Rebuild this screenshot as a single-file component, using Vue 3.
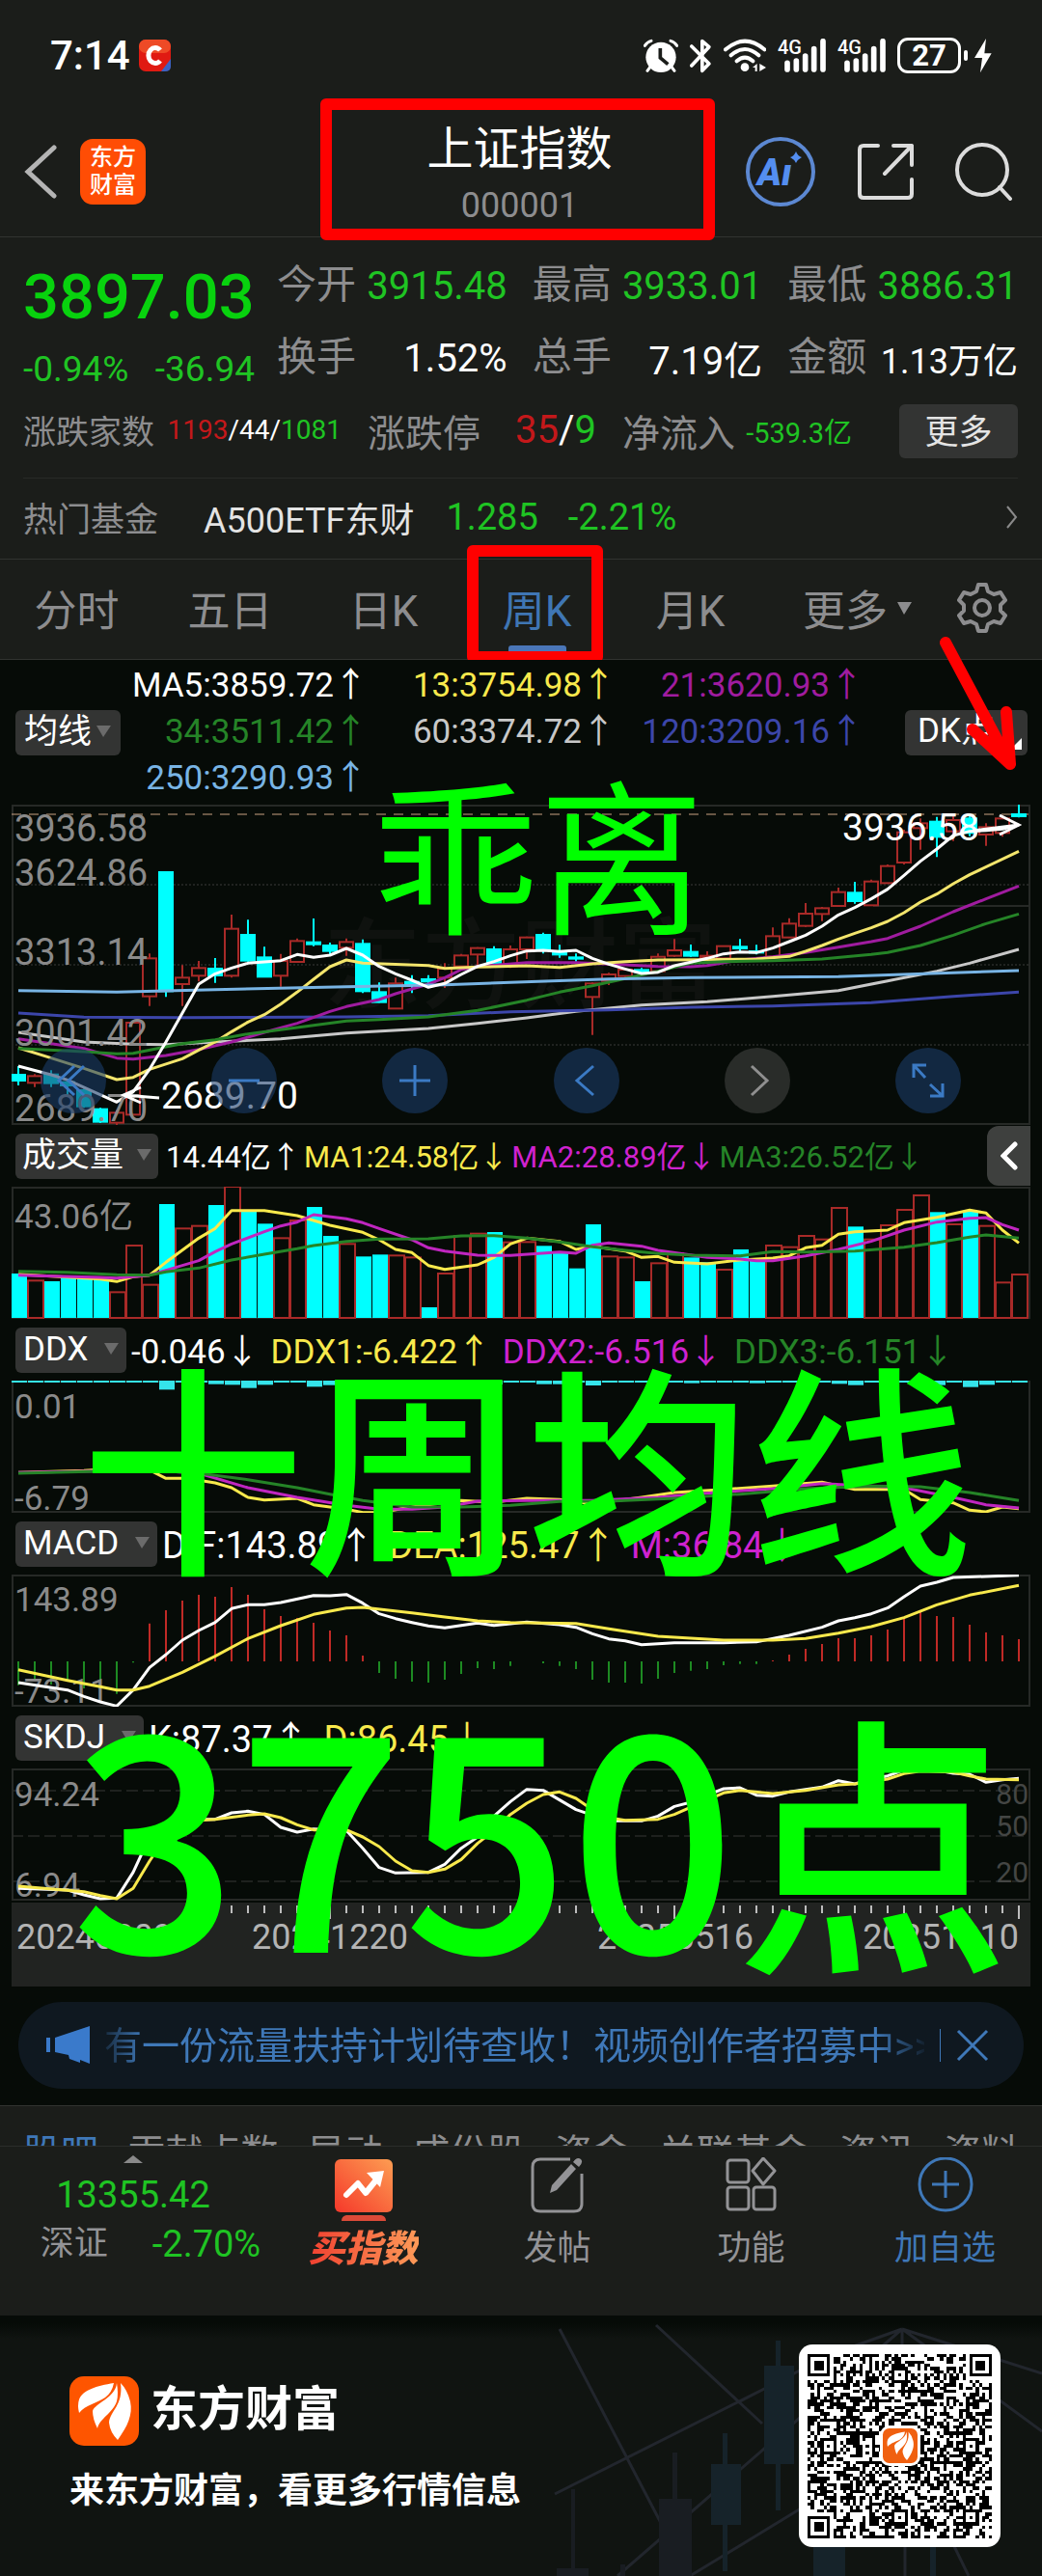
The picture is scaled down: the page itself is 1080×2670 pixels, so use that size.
<template>
  <main class="page">
    <!-- Status bar -->
    <div class="status">
      <span class="clock">7:14</span>
      <svg class="badge-c" width="33" height="33" viewBox="0 0 33 33">
        <rect width="33" height="33" rx="7" fill="#e01a12" />
        <rect width="33" height="14" rx="7" fill="#ee4a26" />
        <path d="M23 33 L33 20 V28 Q33 33 27 33 Z" fill="#3b62c4" />
        <path d="M22 11 A7 8 0 1 0 22 22" fill="none" stroke="#fff" stroke-width="5" />
      </svg>
      <div class="status-icons">
        <svg width="36" height="36" viewBox="54 28 108 108">
          <circle cx="108" cy="86" r="47" fill="#fff" />
          <path d="M66 128 L78 112 M150 128 L138 112 M58 50 Q66 38 78 35 M158 50 Q150 38 138 35" stroke="#fff" stroke-width="9" stroke-linecap="round" fill="none" />
          <path d="M106 58 V88 L130 108" stroke="#1b1d1a" stroke-width="11" fill="none" />
        </svg>
        <svg width="23" height="36" viewBox="197 28 68 108">
          <path d="M202 52 L256 106 L235 128 V36 L256 54 L202 112" stroke="#fff" stroke-width="11" stroke-linecap="round" stroke-linejoin="round" fill="none" />
        </svg>
        <svg width="44" height="36" viewBox="300 28 132 108">
          <path d="M306 62 Q366 10 427 62 M323 80 Q366 42 409 80 M341 98 Q366 76 391 98" stroke="#fff" stroke-width="12" stroke-linecap="round" fill="none" />
          <circle cx="366" cy="117" r="13" fill="#fff" />
          <path d="M390 118 L404 106 V130 H398 V118 Z M432 118 L412 106 V130 L418 126 Z" fill="#fff" />
        </svg>
        <svg v-for="n in 2" :key="n" width="50" height="36" viewBox="468 28 150 108">
          <text x="468" y="77" class="net">4G</text>
          <path d="M498 104 V124 M526 97 V124 M554 82 V124 M581 60 V124 M609 36 V124" stroke="#fff" stroke-width="17" stroke-linecap="round" />
        </svg>
        <span class="battery"><b>27</b></span>
        <svg class="bolt" width="18" height="36" viewBox="1079 26 54 108">
          <path d="M1115 26 L1079 86 H1103 L1097 132 L1132 72 H1110 Z" fill="#fff" />
        </svg>
      </div>
    </div>

    <!-- Header -->
    <header class="header">
      <button class="plain" aria-label="返回">
        <svg width="34" height="56" viewBox="0 0 34 56"><path d="M31 3 L4 28 L31 53" fill="none" stroke="#b4b4b4" stroke-width="5" stroke-linecap="round" /></svg>
      </button>
      <a class="app-logo" href="#"><span>东方</span><span>财富</span></a>
      <div class="title">
        <h1>上证指数</h1>
        <p>000001</p>
      </div>
      <div class="tools">
        <button class="plain" aria-label="Ai">
          <svg width="74" height="74" viewBox="0 0 74 74">
            <circle cx="37" cy="37" r="34" fill="none" stroke="#5c88d2" stroke-width="4" />
            <text x="13" y="51" class="ai">Aı</text>
            <path d="M53 16 Q55 21 59 22 Q55 24 53 28 Q51 24 47 22 Q51 21 53 16 Z" fill="#548ef0" />
          </svg>
        </button>
        <button class="plain" aria-label="分享">
          <svg width="58" height="58" viewBox="0 0 58 58">
            <path d="M21 2 H6 Q2 2 2 6 V52 Q2 56 6 56 H52 Q56 56 56 52 V37 M37 2 H56 V22 M56 2 L28 31" fill="none" stroke="#dcdcdc" stroke-width="4" stroke-linecap="round" stroke-linejoin="round" />
          </svg>
        </button>
        <button class="plain" aria-label="搜索">
          <svg width="60" height="60" viewBox="0 0 60 60">
            <circle cx="28" cy="28" r="26" fill="none" stroke="#dcdcdc" stroke-width="4" />
            <path d="M46 46 L57 58" stroke="#dcdcdc" stroke-width="4" stroke-linecap="round" />
          </svg>
        </button>
      </div>
    </header>

    <!-- Quote -->
    <section class="quote">
      <div class="quote-top">
        <div class="price">
          <strong>3897.03</strong>
          <p><span>-0.94%</span><span>-36.94</span></p>
        </div>
        <dl class="stats">
          <div v-for="s in stats" :key="s.label">
            <dt>{{ s.label }}</dt>
            <dd :class="s.cls">{{ s.value }}</dd>
          </div>
        </dl>
      </div>
      <div class="breadth">
        <div class="pair first"><span class="lbl">涨跌家数</span><span><i class="red">1193</i>/44/<i class="green">1081</i></span></div>
        <div class="pair second"><span class="lbl">涨跌停</span><span><i class="red">35</i>/<i class="green">9</i></span></div>
        <div class="pair third"><span class="lbl">净流入</span><span class="green">-539.3亿</span></div>
        <button class="more">更多</button>
      </div>
      <a class="fund" href="#">
        <span class="lbl">热门基金</span>
        <span class="fund-name">A500ETF东财</span>
        <span class="green">1.285</span>
        <span class="green">-2.21%</span>
        <svg width="12" height="24" viewBox="0 0 12 24"><path d="M1 1 L10 12 L1 23" fill="none" stroke="#8a8a8a" stroke-width="2" /></svg>
      </a>
    </section>

    <!-- Period tabs -->
    <nav class="tabs">
      <button v-for="t in tabs" :key="t" :class="{ active: t === activeTab }" @click="activeTab = t">{{ t }}</button>
      <button>更多<svg width="15" height="13" viewBox="0 0 15 13"><path d="M0 0 H15 L7 13 Z" fill="#8d8d8f" /></svg></button>
      <button class="gear" aria-label="设置">
        <svg width="52" height="52" viewBox="0 0 52 52">
          <path d="M22 2 H30 L32 9 L38 12 L45 10 L50 18 L45 23 V29 L50 34 L45 42 L38 40 L32 43 L30 50 H22 L20 43 L14 40 L7 42 L2 34 L7 29 V23 L2 18 L7 10 L14 12 L20 9 Z" fill="none" stroke="#8d8d8f" stroke-width="4" stroke-linejoin="round" />
          <circle cx="26" cy="26" r="8" fill="none" stroke="#8d8d8f" stroke-width="4" />
        </svg>
      </button>
      <span class="tab-mark"></span>
    </nav>

    <!-- Charts -->
    <section class="charts">
      <div class="legend">
        <label class="pick">
          <select aria-label="主图指标"><option>均线</option></select>
          <svg width="15" height="12" viewBox="0 0 15 12"><path d="M0 0 H15 L7 12 Z" fill="#6b6b6b" /></svg>
        </label>
        <div class="ma-grid">
          <span v-for="m in averages" :key="m.text" :class="m.cls">{{ m.text }}</span>
        </div>
        <button class="dk">DK点</button>
      </div>

      <div class="kline">
        <svg class="panel" viewBox="12 0 1056 332">
          <text x="335" y="203" class="watermark">东方财富</text>
          <path d="M12 83 H1067 M12 166 H1067 M12 249 H1067" class="dotted" />
          <path d="M905 105 H1067" class="frame" />
          <rect x="13" y="1" width="1054" height="330" class="frame" />
          <path d="M12 10 H1067" stroke="#c9a283" stroke-width="1" stroke-dasharray="10 8" />
          <g v-for="(c, i) in candles" :key="i" :class="c[4] ? 'up' : 'down'">
            <path :d="wick(c, i)" />
            <rect :x="12 + 17 * i" :y="(c[1] - 42) / 3" width="14" :height="(c[2] - c[1]) / 3" />
          </g>
          <polyline v-for="l in klineLines" :key="l.color" :points="pts(l.data, 42)" :stroke="l.color" class="line" />
          <text v-for="a in priceAxis" :key="a.text" x="15" :y="a.y" class="axis">{{ a.text }}</text>
          <path d="M146 293 L128 301 L146 309 M128 301 L165 304 M1036 11 L1056 21 L1036 31 M1008 27 L1056 21" fill="none" stroke="#fff" stroke-width="3" />
          <text x="167" y="315" class="extreme">2689.70</text>
          <text x="873" y="37" class="extreme">3936.58</text>
        </svg>
        <div class="controls">
          <button v-for="b in controls" :key="b.name" :aria-label="b.name" :class="{ off: b.off }">
            <svg width="68" height="68" viewBox="0 0 68 68"><path :d="b.d" /></svg>
          </button>
        </div>
      </div>

      <template v-for="p in panels" :key="p.name">
        <div class="panel-head" :class="p.cls">
          <label class="pick">
            <select :aria-label="p.name"><option>{{ p.name }}</option></select>
            <svg width="15" height="12" viewBox="0 0 15 12"><path d="M0 0 H15 L7 12 Z" fill="#6b6b6b" /></svg>
          </label>
          <span v-for="v in p.values" :key="v.text" :class="v.cls">{{ v.text }}</span>
          <button v-if="p.cls === 'volume'" class="collapse" aria-label="展开">
            <svg width="18" height="30" viewBox="0 0 18 30"><path d="M15 3 L3 15 L15 27" fill="none" stroke="#fff" stroke-width="5" stroke-linecap="round" /></svg>
          </button>
        </div>
        <svg class="panel" viewBox="12 0 1056 137">
          <path v-if="p.cls === 'skdj'" d="M12 23 H1067 M12 70 H1067 M12 117 H1067" class="dashed" />
          <rect x="13" y="1" width="1054" height="135" class="frame" />
          <template v-if="p.cls === 'volume'">
            <rect v-for="(b, i) in volumes" :key="i" :x="12 + 17 * i" :y="(b[0] - 210) / 3" width="16" :height="136 - (b[0] - 210) / 3" :class="b[1] ? 'vol-up' : 'vol-down'" />
          </template>
          <template v-if="p.cls === 'ddx'">
            <rect v-for="(v, i) in ddxBars" :key="i" :x="12 + 17 * i" y="0" width="16" :height="(v - 152) / 3" fill="#35e4ea" />
          </template>
          <template v-if="p.cls === 'macd'">
            <path v-for="(v, i) in macdBars" :key="i" :d="`M${19 + 17 * i} 90 V${(v - 756) / 3}`" :stroke="v < 1026 ? '#c02a26' : '#1d8a22'" stroke-width="2" />
          </template>
          <text v-for="a in p.axis" :key="a.text" :x="a.x || 15" :y="a.y" :class="a.x ? 'axis-dim' : 'axis-small'">{{ a.text }}</text>
          <polyline v-for="l in p.lines" :key="l.color" :points="pts(l.data, p.top)" :stroke="l.color" class="line" />
        </svg>
      </template>

      <svg class="panel dates" viewBox="12 0 1056 87">
        <path :d="ticks" stroke="#bdbdbd" stroke-width="2" />
        <text x="17" y="48">20240809</text>
        <text x="342" y="48" text-anchor="middle">20241220</text>
        <text x="700" y="48" text-anchor="middle">20250516</text>
        <text x="1056" y="48" text-anchor="end">20251010</text>
      </svg>

      <svg class="arrow" width="84" height="144" viewBox="0 0 84 144">
        <path d="M8 8 L75 134 M36 98 L75 134 L71 80" fill="none" stroke="#f00" stroke-width="12" stroke-linecap="round" stroke-linejoin="round" />
      </svg>
      <span class="note note-a">乖离</span>
      <span class="note note-b">十周均线</span>
      <span class="note note-c">3750<small>点</small></span>
    </section>

    <!-- Notice -->
    <section class="notice-wrap">
      <div class="notice">
        <svg width="46" height="40" viewBox="0 0 46 40"><path d="M9 12 L45 0 V39 L35 35 V38 L24 34 L23 30 L9 27 Z M0 12 H4 V27 H0 Z" fill="#3a7acb" /></svg>
        <a href="#">有一份流量扶持计划待查收！视频创作者招募中&gt;&gt;</a>
        <button aria-label="关闭">
          <svg width="34" height="34" viewBox="0 0 34 34"><path d="M2 2 L32 32 M32 2 L2 32" stroke="#3f78b8" stroke-width="3" /></svg>
        </button>
      </div>
    </section>

    <nav class="sections">
      <a v-for="(s, i) in sections" :key="s" href="#" :class="{ active: i === 0 }">{{ s }}</a>
    </nav>

    <!-- Bottom bar -->
    <nav class="bottom">
      <a class="peer" href="#">
        <svg width="20" height="8" viewBox="0 0 20 8"><path d="M0 8 L10 0 L20 8 Z" fill="#8a8a8a" /></svg>
        <b>13355.42</b>
        <span><i>深证</i><b>-2.70%</b></span>
      </a>
      <a class="buy" href="#">
        <svg width="60" height="66" viewBox="0 0 60 66">
          <defs>
            <linearGradient id="hot" x1="0" y1="1" x2="1" y2="0">
              <stop offset="0" stop-color="#f5382a" />
              <stop offset="1" stop-color="#fd9d52" />
            </linearGradient>
          </defs>
          <rect y="2" width="60" height="55" rx="6" fill="url(#hot)" />
          <path d="M12 60 H48 Q53 61 53 66 H7 Q7 61 12 60 Z" fill="#dc4a38" />
          <path d="M12 39 L24 27 L32 37 L45 21" fill="none" stroke="#fff" stroke-width="6" stroke-linecap="round" stroke-linejoin="round" />
          <path d="M33 16 L51 14 L47 31 Z" fill="#fff" />
        </svg>
        <span>买指数</span>
      </a>
      <a href="#">
        <svg width="60" height="66" viewBox="0 0 60 66">
          <path d="M43 2 H12 Q4 2 4 10 V48 Q4 56 12 56 H47 Q55 56 55 48 V17" fill="none" stroke="#939396" stroke-width="3" />
          <path d="M22 37 L24 29 L44 7 L49 12 L29 34 Z M46 5 Q50 -1 54 2 Q57 5 52 10 Z" fill="#939396" />
        </svg>
        <span>发帖</span>
      </a>
      <a href="#">
        <svg width="60" height="66" viewBox="0 0 60 66" fill="none" stroke="#939396" stroke-width="3">
          <rect x="5" y="3" width="22" height="23" rx="3" />
          <path d="M42 1 L54 14 L42 28 L31 14 Z" stroke-linejoin="round" />
          <rect x="5" y="31" width="22" height="23" rx="3" />
          <rect x="32" y="31" width="22" height="23" rx="3" />
        </svg>
        <span>功能</span>
      </a>
      <a class="add" href="#">
        <svg width="60" height="66" viewBox="0 0 60 66" fill="none" stroke="#3f78b8" stroke-width="3">
          <circle cx="30" cy="28" r="27" />
          <path d="M30 14 V42 M16 28 H44" />
        </svg>
        <span>加自选</span>
      </a>
    </nav>

    <!-- Footer -->
    <footer class="footer">
      <svg class="backdrop" viewBox="560 0 520 270" preserveAspectRatio="xMaxYMin slice">
        <g stroke="#22262d" stroke-width="3" fill="none">
          <path d="M580 14 L685 215 M680 10 L790 112 M575 185 L800 72 M935 14 L862 40 L765 90 M935 14 L640 270 M935 14 V50 M935 14 L1080 120 M935 14 L1080 60 M715 270 L830 200 M960 180 L1004 270 M938 240 V270" />
        </g>
        <g fill="#16232a">
          <rect x="792" y="52" width="31" height="102" /><rect x="804" y="26" width="5" height="176" />
          <rect x="737" y="154" width="31" height="63" /><rect x="749" y="122" width="5" height="143" />
          <rect x="843" y="230" width="33" height="40" /><rect x="964" y="230" width="6" height="40" />
        </g>
        <g fill="#191d22">
          <rect x="683" y="190" width="34" height="80" /><rect x="697" y="142" width="5" height="60" />
          <rect x="577" y="262" width="33" height="8" /><rect x="592" y="180" width="4" height="90" />
          <rect x="643" y="258" width="5" height="12" />
        </g>
      </svg>
      <div class="brand">
        <div class="brand-row">
          <svg width="72" height="72" viewBox="0 0 72 72">
            <rect width="72" height="72" rx="15" fill="#fe5500" />
            <path :d="feather" fill="#fff" />
          </svg>
          <b>东方财富</b>
        </div>
        <p>来东方财富，看更多行情信息</p>
      </div>
      <div class="qr">
        <svg width="191" height="191" viewBox="0 0 57 57" shape-rendering="crispEdges">
          <path :d="qrPath" fill="#000" />
        </svg>
        <svg class="qr-logo" width="42" height="42" viewBox="-6 -6 84 84">
          <rect x="-6" y="-6" width="84" height="84" rx="20" fill="#fff" />
          <rect width="72" height="72" rx="13" fill="#f06010" />
          <path :d="feather" fill="#fff" />
        </svg>
      </div>
    </footer>
  </main>
</template>

<script setup>
import { ref } from 'vue';

const activeTab = ref('周K');
const tabs = ['分时', '五日', '日K', '周K', '月K'];
const sections = ['股吧', '贡献点数', '异动', '成份股', '资金', '关联基金', '资讯', '资料'];

const stats = [
  { label: '今开', value: '3915.48', cls: 'green' },
  { label: '最高', value: '3933.01', cls: 'green' },
  { label: '最低', value: '3886.31', cls: 'green' },
  { label: '换手', value: '1.52%', cls: '' },
  { label: '总手', value: '7.19亿', cls: '' },
  { label: '金额', value: '1.13万亿', cls: 'small' }
];

const averages = [
  { text: 'MA5:3859.72↑', cls: 'c-white' },
  { text: '13:3754.98↑', cls: 'c-yellow' },
  { text: '21:3620.93↑', cls: 'c-purple' },
  { text: '34:3511.42↑', cls: 'c-green' },
  { text: '60:3374.72↑', cls: 'c-grey' },
  { text: '120:3209.16↑', cls: 'c-indigo' },
  { text: '250:3290.93↑', cls: 'c-sky' }
];

const controls = [
  { name: '快退', d: 'M35 19 L19 34 L35 49 M45 19 L29 34 L45 49' },
  { name: '缩小', d: 'M18 34 H50' },
  { name: '放大', d: 'M18 34 H50 M34 18 V50' },
  { name: '左移', d: 'M41 19 L24 34 L41 49' },
  { name: '右移', d: 'M28 19 L44 34 L28 49', off: true },
  { name: '全屏', d: 'M32 18 H19 V31 M19 18 L31 31 M36 50 H49 V37 M49 50 L36 38' }
];

const priceAxis = [
  { text: '3936.58', y: 38 },
  { text: '3624.86', y: 84 },
  { text: '3313.14', y: 166 },
  { text: '3001.42', y: 250 },
  { text: '2689.70', y: 328 }
];

// [high, body top, body bottom, low, rising]
const candles = [
  [855, 882, 900, 915, 0], [880, 886, 907, 920, 1], [868, 881, 908, 920, 0], [900, 905, 915, 945, 0],
  [925, 930, 980, 985, 0], [985, 989, 1028, 1032, 0], [992, 1000, 1031, 1040, 1], [715, 720, 1006, 1006, 1],
  [505, 520, 638, 668, 1], [252, 252, 622, 640, 0], [541, 580, 600, 668, 1], [528, 550, 574, 592, 1],
  [519, 552, 573, 596, 0], [384, 428, 574, 580, 1], [400, 447, 527, 530, 0], [484, 517, 577, 579, 0],
  [506, 528, 574, 608, 1], [458, 466, 531, 533, 1], [396, 470, 476, 482, 0], [471, 480, 497, 508, 0],
  [458, 469, 487, 512, 1], [461, 475, 622, 628, 0], [595, 625, 656, 658, 0], [580, 598, 676, 678, 1],
  [572, 593, 600, 628, 0], [572, 585, 592, 600, 0], [535, 552, 580, 612, 1], [506, 511, 545, 550, 1],
  [485, 488, 508, 540, 1], [482, 492, 535, 540, 0], [480, 492, 545, 550, 1], [452, 455, 492, 522, 1],
  [440, 447, 493, 505, 0], [478, 503, 508, 518, 0], [505, 517, 521, 530, 0], [595, 598, 640, 758, 1],
  [565, 570, 590, 603, 1], [550, 555, 575, 578, 1], [550, 556, 562, 568, 0], [505, 515, 560, 560, 1],
  [460, 495, 512, 515, 1], [477, 500, 512, 515, 0], [498, 512, 518, 525, 1], [480, 482, 520, 522, 1],
  [460, 484, 489, 498, 0], [478, 498, 502, 508, 0], [424, 451, 515, 518, 1], [395, 412, 455, 457, 1],
  [348, 381, 419, 422, 1], [360, 364, 382, 404, 1], [300, 314, 357, 360, 1], [282, 316, 342, 350, 0],
  [275, 281, 355, 357, 1], [228, 233, 286, 288, 1], [120, 128, 222, 228, 1], [85, 100, 115, 182, 1],
  [80, 95, 142, 205, 0], [75, 90, 125, 155, 1], [70, 85, 130, 140, 0], [100, 112, 135, 170, 1],
  [75, 85, 130, 142, 1], [42, 72, 78, 82, 0]
];

const wick = (c, i) => {
  const x = 19 + 17 * i;
  const y = (v) => (v - 42) / 3;
  return `M${x} ${y(c[0])} V${y(c[1])} M${x} ${y(c[2])} V${y(c[3])}`;
};

// Lines are stored as "week:value" lists
const pts = (data, top) =>
  data
    .split(' ')
    .map((p) => p.split(':').map(Number))
    .map(([i, v]) => `${19 + 17 * i},${(v - top) / 3}`)
    .join(' ');

const klineLines = [
  { color: '#c8c8c8', data: '0:750 4:780 7:787 9:788 12:780 16:770 20:752 25:738 28:722 31:705 34:685 38:665 42:655 46:638 50:620 53:590 56:560 58:535 61:492' },
  { color: '#3c46aa', data: '0:690 4:703 10:704 20:702 25:698 30:686 36:680 41:672 46:668 52:658 57:638 61:625' },
  { color: '#9f1c9f', data: '0:770 4:800 6:830 7:833 9:822 11:803 13:780 15:750 17:722 19:685 20:670 22:648 23:630 25:600 26:580 27:555 28:545 31:533 34:533 37:540 39:545 41:546 42:542 44:525 46:515 48:502 50:485 52:468 53:458 55:420 57:375 59:335 61:295' },
  { color: '#f3e56c', data: '0:798 2:830 4:862 6:897 7:890 8:865 10:832 11:805 12:780 13:748 14:718 15:695 16:662 17:625 18:585 19:546 20:525 21:535 25:542 26:551 28:547 31:543 33:548 35:537 37:530 39:525 42:524 45:522 47:514 48:498 49:480 50:460 51:442 52:425 53:405 54:378 55:345 56:320 57:288 58:260 61:187' },
  { color: '#258427', data: '0:800 4:810 6:817 7:815 9:795 10:785 12:773 14:755 16:742 18:728 20:715 22:710 25:702 28:682 31:650 33:625 35:605 37:583 39:560 41:535 43:530 46:527 49:522 52:508 53:502 55:480 57:448 59:412 61:382' },
  { color: '#78b4e4', data: '0:620 6:625 12:617 20:608 26:602 30:595 36:584 41:580 50:577 57:565 61:558' },
  { color: '#ffffff', data: '0:855 2:882 3:898 6:967 7:935 8:865 9:780 10:690 11:600 12:568 13:550 14:535 16:527 17:508 18:517 19:510 20:489 21:510 22:545 23:568 24:588 25:610 26:598 27:570 28:545 29:530 30:512 31:497 32:495 33:499 34:495 35:520 36:538 37:553 38:567 39:563 40:543 41:532 42:520 43:506 44:500 45:502 46:488 47:468 48:448 49:420 50:385 51:362 52:335 53:305 54:262 55:218 56:180 57:138 58:125 59:122 60:118 61:105' }
];

// [top, rising]
const volumes = [
  [480, 0], [502, 1], [504, 0], [494, 0], [494, 0], [494, 0], [538, 1], [393, 1], [515, 1], [264, 0], [340, 1],
  [332, 1], [267, 0], [210, 1], [283, 0], [325, 0], [370, 1], [315, 1], [273, 0], [363, 0], [388, 1], [427, 0],
  [421, 0], [424, 1], [430, 1], [585, 0], [480, 1], [363, 1], [356, 1], [351, 0], [383, 1], [382, 1], [394, 0],
  [412, 0], [464, 0], [327, 0], [427, 1], [430, 1], [504, 0], [448, 1], [417, 1], [430, 0], [445, 0], [468, 1],
  [405, 0], [440, 0], [393, 1], [398, 1], [363, 1], [374, 1], [276, 1], [334, 0], [374, 1], [330, 1], [282, 1],
  [237, 1], [289, 0], [327, 1], [285, 0], [332, 1], [508, 1], [483, 1]
];

const ddxDeep = { 9: 180, 12: 163, 13: 165, 14: 175, 15: 165, 18: 171, 19: 166, 29: 164, 32: 163, 33: 163, 35: 167, 41: 160, 45: 160, 50: 162, 51: 166, 56: 166, 58: 172, 59: 165 };
const ddxBars = Array.from({ length: 62 }, (_, i) => ddxDeep[i] || 158);

const macdBars = [
  1100, 1085, 1098, 1083, 1110, 1127, 1127, 1030, 908, 867, 837, 819, 825, 795, 819, 864, 885, 891, 906, 930, 945,
  1008, 1062, 1080, 1089, 1092, 1083, 1065, 1047, 1050, 1040, 1026, 1032, 1040, 1050, 1083, 1092, 1092, 1095, 1080,
  1062, 1055, 1050, 1038, 1034, 1034, 1023, 1005, 987, 972, 954, 954, 945, 927, 890, 873, 885, 888, 912, 936, 945, 957
];

const panels = [
  {
    name: '成交量',
    cls: 'volume',
    top: 210,
    values: [
      { text: '14.44亿↑', cls: 'c-white' },
      { text: 'MA1:24.58亿↓', cls: 'c-yellow' },
      { text: 'MA2:28.89亿↓', cls: 'c-magenta' },
      { text: 'MA3:26.52亿↓', cls: 'c-green' }
    ],
    axis: [{ text: '43.06亿', y: 43 }],
    lines: [
      { color: '#f8e94c', data: '0:482 5:497 6:505 7:490 8:485 9:445 11:370 12:340 13:284 15:284 17:300 19:330 21:352 22:375 23:405 24:415 25:455 26:467 28:453 29:430 30:388 31:370 33:380 34:405 35:395 37:410 38:430 39:427 40:445 42:450 44:438 46:432 47:425 48:400 49:392 50:358 51:350 53:345 54:322 56:305 58:283 59:292 60:345 61:385' },
      { color: '#c026c0', data: '0:485 5:492 6:494 8:485 9:470 10:455 11:440 12:412 13:388 15:350 16:332 17:320 18:297 20:310 21:322 22:340 24:375 25:400 26:410 28:423 30:424 33:413 34:417 35:392 36:385 38:395 39:408 42:430 44:435 45:440 46:440 48:425 50:405 52:380 54:345 56:320 58:308 59:306 60:328 61:345' },
      { color: '#258427', data: '0:473 3:476 6:484 8:485 9:475 11:463 13:438 15:420 17:403 18:393 20:380 22:373 25:372 27:363 29:362 31:370 33:382 35:397 37:408 39:418 41:423 44:425 46:412 48:413 51:410 54:398 56:384 58:367 59:360 61:370' }
    ]
  },
  {
    name: 'DDX',
    cls: 'ddx',
    top: 152,
    values: [
      { text: '-0.046↓', cls: 'c-white' },
      { text: 'DDX1:-6.422↑', cls: 'c-yellow' },
      { text: 'DDX2:-6.516↓', cls: 'c-magenta' },
      { text: 'DDX3:-6.151↓', cls: 'c-green' }
    ],
    axis: [{ text: '0.01', y: 39 }, { text: '-6.79', y: 134 }],
    lines: [
      { color: '#f8e94c', data: '0:438 4:432 6:426 8:430 9:456 10:456 11:462 12:470 13:485 14:515 15:523 17:518 18:538 20:552 21:562 22:562 24:545 27:525 29:530 31:518 33:522 35:535 38:515 40:500 43:490 46:480 49:468 51:490 54:490 55:522 57:532 58:555 59:560 60:545 61:550' },
      { color: '#c026c0', data: '0:438 8:430 11:440 14:485 17:515 20:540 22:552 24:552 26:545 28:527 31:525 35:525 39:515 43:498 46:488 49:472 54:485 57:515 59:538 61:548' },
      { color: '#258427', data: '0:440 8:430 11:440 14:460 17:485 19:505 21:525 24:545 27:545 30:540 33:528 36:527 40:518 44:505 48:488 52:480 55:482 58:500 61:525' }
    ]
  },
  {
    name: 'MACD',
    cls: 'macd',
    top: 756,
    values: [
      { text: 'DIF:143.89↑', cls: 'c-white' },
      { text: 'DEA:125.47↑', cls: 'c-yellow' },
      { text: 'M:36.84↓', cls: 'c-magenta' }
    ],
    axis: [{ text: '143.89', y: 38 }, { text: '-73.11', y: 133 }],
    lines: [
      { color: '#ffffff', data: '0:1092 3:1115 4:1135 5:1152 6:1165 7:1115 8:1045 9:1005 10:960 11:930 12:905 13:862 14:850 15:850 16:843 18:821 19:822 20:818 21:845 22:878 23:893 24:905 25:916 26:922 28:907 29:914 31:904 33:912 34:920 35:940 36:956 37:962 38:974 40:968 43:968 45:965 47:945 49:920 50:900 51:890 52:878 53:860 54:825 55:792 56:780 57:765 59:762 61:758' },
      { color: '#f8e94c', data: '0:1052 3:1085 5:1105 6:1115 7:1115 8:1103 10:1060 12:1010 14:955 16:915 18:880 20:860 21:858 24:875 26:888 28:900 30:905 34:908 36:925 39:948 43:960 46:960 48:955 50:938 52:918 54:890 56:850 58:820 61:790' }
    ]
  },
  {
    name: 'SKDJ',
    cls: 'skdj',
    top: 217,
    values: [
      { text: 'K:87.37↑', cls: 'c-white' },
      { text: 'D:86.45↓', cls: 'c-yellow' }
    ],
    axis: [
      { text: '94.24', y: 39 },
      { text: '6.94', y: 133 },
      { text: '80', x: 1066, y: 37 },
      { text: '50', x: 1066, y: 70 },
      { text: '20', x: 1066, y: 118 }
    ],
    lines: [
      { color: '#ffffff', data: '0:590 3:595 4:610 5:622 6:620 7:540 8:430 9:385 10:375 12:375 13:355 14:350 15:360 16:400 17:415 18:405 20:410 21:465 22:525 23:542 25:540 26:515 27:465 28:430 29:365 30:320 31:282 32:285 33:315 34:345 35:362 36:380 38:380 39:365 40:335 41:322 42:300 43:280 44:277 45:300 46:303 47:290 49:275 50:255 51:265 52:250 53:240 54:222 56:222 57:232 58:235 59:260 60:252 61:248' },
      { color: '#f8e94c', data: '0:583 4:600 5:612 6:622 7:590 8:505 9:430 10:390 11:378 12:375 14:362 15:358 16:370 17:392 18:408 20:408 21:430 22:460 23:505 24:535 25:540 26:530 27:500 28:450 29:410 30:360 31:325 32:298 33:290 34:310 35:345 36:370 37:378 39:375 40:360 42:315 43:293 44:285 46:295 48:285 50:268 51:265 53:250 54:233 55:225 57:228 58:240 59:250 61:252' }
    ]
  }
];

const ticks = Array.from({ length: 50 }, (_, n) => n + 12)
  .map((i) => `M${19 + 17 * i} 3 V${[19, 40, 61].includes(i) ? 17 : 11}`)
  .join(' ');

const feather =
  'M46 7 C28 10 14 14 10 24 Q8 30 10 38 C16 30 30 27 37 22 Q44 17 46 7 Z ' +
  'M49 7 C48 22 26 28 24 36 Q24 44 29 54 C31 44 45 38 49 26 Q51 18 49 7 Z ' +
  'M53 7 C56 30 42 36 41 48 Q42 58 50 66 C60 52 66 40 63 26 Q60 14 53 7 Z';

// QR modules: three finders, the alignment marks and the data area
const ring = (x, y, cx, cy, r) => {
  const d = Math.max(Math.abs(x - cx), Math.abs(y - cy));
  return d > r ? null : r === 4 ? d === 3 || d <= 1 : d !== 1;
};
const isDark = (x, y, rnd) => {
  for (const [cx, cy] of [[3, 3], [53, 3], [3, 53]]) {
    const hit = ring(x, y, cx, cy, 4);
    if (hit !== null) return hit;
  }
  for (const [cx, cy] of [[28, 6], [6, 28], [50, 28], [28, 50], [50, 50]]) {
    const hit = ring(x, y, cx, cy, 2);
    if (hit !== null) return hit;
  }
  if (x === 6) return y % 2 === 0;
  if (y === 6) return x % 2 === 0;
  return rnd > 0.5;
};
let seed = 20251;
let qrPath = '';
for (let y = 0; y < 57; y++) {
  for (let x = 0; x < 57; x++) {
    seed = (seed * 16807) % 2147483647;
    if (isDark(x, y, seed / 2147483647)) qrPath += `M${x} ${y}h1v1h-1z`;
  }
}
</script>

<style>
body {
  margin: 0;
  background: #1b1d1a;
}
</style>

<style scoped>
.page {
  font-family: Roboto, "Noto Sans CJK SC", sans-serif;
  background: #1b1d1a;
  color: #fff;
  overflow: hidden;
}

.page * {
  box-sizing: border-box;
}

button,
select {
  font-family: inherit;
  color: inherit;
  background: none;
  border: 0;
  padding: 0;
  margin: 0;
}

svg {
  display: block;
  flex: none;
}

a {
  color: inherit;
  text-decoration: none;
}

i {
  font-style: normal;
}

p,
h1,
dl,
dd {
  margin: 0;
}

.red {
  color: #c4181a;
}

.green {
  color: #1fc423;
}

.lbl {
  color: #8d8d8f;
}

.c-white { color: #fff; }
.c-yellow { color: #f8e94c; }
.c-purple { color: #a01ca0; }
.c-magenta { color: #cf22cf; }
.c-green { color: #258427; }
.c-grey { color: #c8c8c8; }
.c-indigo { color: #3c46aa; }
.c-sky { color: #78b4e4; }

/* Status bar */
.status {
  display: flex;
  align-items: center;
  height: 115px;
  padding: 0 52px;
}

.clock {
  font-size: 42px;
  font-weight: 500;
}

.badge-c {
  margin-left: 9px;
}

.status-icons {
  display: flex;
  align-items: center;
  gap: 12px;
  margin-left: auto;
}

.net {
  font-size: 60px;
  font-weight: 500;
  fill: #fff;
}

.battery {
  position: relative;
  width: 66px;
  height: 37px;
  border: 3px solid #fff;
  border-radius: 11px;
  font-size: 31px;
  line-height: 31px;
  text-align: center;
}

.battery b {
  font-weight: 700;
}

.battery::after {
  content: "";
  position: absolute;
  right: -10px;
  top: 10px;
  width: 4px;
  height: 11px;
  border-radius: 2px;
  background: #fff;
}

.bolt {
  margin-left: 2px;
}

/* Header */
.header {
  position: relative;
  display: flex;
  align-items: center;
  height: 131px;
  padding: 0 30px 4px 25px;
  border-bottom: 1px solid #313330;
}

.plain {
  display: block;
}

.app-logo {
  display: flex;
  flex-direction: column;
  align-items: center;
  justify-content: center;
  width: 68px;
  height: 68px;
  margin-left: 24px;
  border-radius: 13px;
  background: #ff4d05;
  font-size: 24px;
  font-weight: 500;
  line-height: 29px;
}

.title {
  position: absolute;
  left: calc(50% - 208px);
  top: -13px;
  width: 409px;
  height: 147px;
  padding: 11px 0 0 4px;
  border: 12px solid #f00;
  border-radius: 6px;
  text-align: center;
}

.title h1 {
  font-size: 48px;
  font-weight: 400;
  line-height: 60px;
}

.title p {
  font-size: 36px;
  line-height: 56px;
  color: #8d8d8f;
}

.tools {
  display: flex;
  align-items: center;
  gap: 43px;
  margin-left: auto;
}

.ai {
  font-size: 38px;
  font-weight: 900;
  font-style: italic;
  fill: #548ef0;
}

/* Quote */
.quote {
  padding: 0 25px 0 24px;
}

.quote-top {
  display: flex;
  padding-top: 21px;
}

.price {
  width: 263px;
  color: #08d20e;
}

.price strong {
  display: block;
  font-size: 65px;
  font-weight: 500;
  line-height: 82px;
}

.price p {
  display: flex;
  justify-content: space-between;
  padding-right: 23px;
  margin-top: 10px;
  font-size: 37px;
  line-height: 48px;
  color: #1fc423;
}

.stats {
  flex: 1;
  display: grid;
  grid-template-columns: repeat(3, 1fr);
  align-content: start;
  gap: 25px 26px;
  padding-top: 4px;
}

.stats div {
  display: flex;
  align-items: center;
  justify-content: space-between;
  height: 50px;
  white-space: nowrap;
}

.stats dt {
  font-size: 41px;
  line-height: 50px;
  padding-bottom: 2px;
  color: #8d8d8f;
}

.stats dd {
  font-size: 40px;
}

.stats dd.small {
  font-size: 36px;
}

.breadth {
  display: flex;
  align-items: center;
  gap: 27px;
  height: 56px;
  margin-top: 12px;
}

.pair {
  display: flex;
  align-items: center;
  justify-content: space-between;
  padding-bottom: 3px;
  white-space: nowrap;
}

.first {
  width: 330px;
  font-size: 28px;
}

.first .lbl {
  font-size: 34px;
}

.second {
  width: 237px;
  font-size: 40px;
}

.second .lbl,
.third .lbl {
  font-size: 39px;
}

.third {
  width: 238px;
  font-size: 29px;
}

.more {
  width: 123px;
  height: 56px;
  padding-bottom: 6px;
  margin-left: auto;
  border-radius: 6px;
  background: #333433;
  color: #e4e4e4;
  font-size: 35px;
}

.fund {
  display: flex;
  align-items: center;
  height: 84px;
  padding-bottom: 4px;
  margin-top: 20px;
  border-top: 1px solid #282a27;
  font-size: 38px;
}

.fund .lbl {
  font-size: 35px;
}

.fund-name {
  margin: 0 33px 0 47px;
  color: #e4e4e4;
  font-size: 36px;
}

.fund .green + .green {
  margin-left: 31px;
}

.fund svg {
  margin-left: auto;
}

/* Period tabs */
.tabs {
  position: relative;
  display: grid;
  grid-template-columns: repeat(5, 159fr) 187fr 98fr;
  height: 105px;
  border-top: 1px solid #313330;
  border-bottom: 1px solid #313330;
  color: #8d8d8f;
}

.tabs button {
  position: relative;
  display: flex;
  align-items: center;
  justify-content: center;
  gap: 10px;
  padding-bottom: 3px;
  font-size: 44px;
}

.tabs .active {
  color: #3f76b4;
}

.tabs .active::after {
  content: "";
  position: absolute;
  bottom: 6px;
  width: 60px;
  height: 8px;
  border-radius: 3px 3px 0 0;
  background: #4a76b8;
}

.tabs .gear {
  justify-content: flex-start;
  padding-left: 10px;
}

.tab-mark {
  position: absolute;
  left: calc(50% - 56px);
  top: -15px;
  width: 141px;
  height: 122px;
  border: 12px solid #f00;
  border-radius: 6px;
}

/* Charts */
.charts {
  position: relative;
  padding: 0 12px 16px;
  background: #060b07;
}

.legend {
  display: flex;
  align-items: center;
  height: 150px;
  padding: 0 4px;
}

.pick {
  display: flex;
  align-items: center;
  gap: 4px;
  height: 47px;
  padding: 0 10px 2px 9px;
  border-radius: 6px;
  background: #333433;
}

.pick select {
  appearance: none;
  font-size: 35px;
}

.ma-grid {
  flex: none;
  display: grid;
  grid-template-columns: 256px 257px 257px;
  font-size: 35px;
  line-height: 48px;
  text-align: right;
}

.dk {
  position: relative;
  width: 127px;
  height: 47px;
  margin-left: auto;
  margin-right: -1px;
  padding: 0 0 3px 13px;
  border-radius: 6px;
  background: #333433;
  font-size: 35px;
  line-height: 44px;
  text-align: left;
}

.dk::after {
  content: "";
  position: absolute;
  right: 6px;
  bottom: 6px;
  border: 6px solid;
  border-color: transparent #fff #fff transparent;
}

.kline {
  position: relative;
}

.panel {
  width: 100%;
  height: auto;
}

.frame {
  fill: none;
  stroke: #262926;
  stroke-width: 2;
}

.dotted {
  stroke: #3a3d3a;
  stroke-dasharray: 2 2;
}

.dashed {
  stroke: #363936;
  stroke-width: 1;
  stroke-dasharray: 12 5;
}

.watermark {
  font-size: 102px;
  font-weight: 500;
  fill: #0f120f;
}

.up path,
.up rect {
  fill: #060b07;
  stroke: #a82a28;
  stroke-width: 2;
}

.down path,
.down rect {
  fill: #00ffff;
  stroke: #00ffff;
  stroke-width: 2;
}

.vol-up {
  fill: #060b07;
  stroke: #a82a28;
  stroke-width: 2;
}

.vol-down {
  fill: #00ffff;
}

.line {
  fill: none;
  stroke-width: 3;
  stroke-linejoin: round;
}

.axis {
  font-size: 38px;
  fill: #8a8a8a;
}

.axis-small {
  font-size: 35px;
  fill: #8a8a8a;
}

.axis-dim {
  font-size: 30px;
  fill: #444644;
  text-anchor: end;
}

.extreme {
  font-size: 39px;
  fill: #fff;
}

.controls {
  position: absolute;
  left: 0;
  right: 0;
  bottom: 12px;
  display: flex;
  justify-content: space-between;
  padding: 0 72px 0 30px;
}

.controls button {
  border-radius: 50%;
  background: rgba(26, 60, 105, 0.6);
}

.controls .off {
  background: #292c29;
}

.controls path {
  fill: none;
  stroke: #3b7ac4;
  stroke-width: 3;
}

.controls .off path {
  stroke: #8f8f8f;
}

.panel-head {
  display: flex;
  align-items: center;
  height: 64px;
  padding-left: 4px;
  white-space: nowrap;
}

.panel-head .pick {
  gap: 16px;
  padding: 0 8px 2px;
  margin-right: 5px;
}

.panel-head span {
  padding-bottom: 4px;
}

.volume {
  gap: 3px;
  font-size: 31px;
}

.volume .pick {
  gap: 13px;
  padding: 0 7px 2px;
}

.ddx {
  font-size: 35px;
}

.ddx span {
  margin-right: 12px;
}

.macd,
.skdj {
  font-size: 38px;
}

.macd span,
.skdj span {
  margin-right: 15px;
}

.collapse {
  display: flex;
  align-items: center;
  justify-content: center;
  width: 45px;
  height: 62px;
  margin-left: auto;
  border-radius: 12px 0 0 12px;
  background: #3e403e;
}

.dates {
  margin-top: 2px;
  background: #212321;
  font-size: 36px;
  fill: #b4b4b4;
}

.arrow {
  position: absolute;
  right: 24px;
  top: -26px;
}

.note {
  position: absolute;
  font-family: "Noto Sans CJK SC", sans-serif;
  font-weight: 500;
  line-height: 1;
  white-space: nowrap;
  color: #0f0;
}

.note-a {
  left: 386px;
  top: 110px;
  font-size: 172px;
  font-weight: 400;
}

.note-b {
  left: 84px;
  top: 714px;
  font-size: 231px;
}

.note-c {
  left: 74px;
  top: 1058px;
  font-size: 302px;
}

.note-c small {
  font-size: 284px;
}

/* Notice */
.notice-wrap {
  padding: 0 19px 17px;
  background: #060b07;
  border-bottom: 1px solid #313330;
}

.notice {
  display: flex;
  align-items: center;
  height: 90px;
  padding: 0 36px 0 29px;
  border-radius: 45px;
  background: #0f1820;
}

.notice a {
  flex: 1;
  margin-left: 14px;
  padding-bottom: 6px;
  overflow: hidden;
  font-size: 39px;
  white-space: nowrap;
  color: #3f78b8;
  mask-image: linear-gradient(90deg, rgba(0, 0, 0, 0.2), #000 40px, #000 calc(100% - 50px), rgba(0, 0, 0, 0.1));
}

.notice button {
  margin-left: 16px;
  padding-left: 16px;
  border-left: 1px solid #3f78b8;
}

.sections {
  display: flex;
  justify-content: space-between;
  height: 42px;
  padding: 26px 24px 0;
  overflow: hidden;
  border-bottom: 1px solid #2b2d2a;
  font-size: 39px;
  line-height: 46px;
  color: #8d8d8f;
  white-space: nowrap;
}

.sections .active {
  color: #3f78b8;
}

/* Bottom bar */
.bottom {
  display: grid;
  grid-template-columns: 276fr repeat(4, 201fr);
  height: 175px;
  font-size: 35px;
  color: #939396;
}

.bottom a {
  display: flex;
  flex-direction: column;
  align-items: center;
  padding-top: 11px;
}

.bottom a > span {
  line-height: 58px;
}

.bottom .peer {
  padding-top: 9px;
}

.peer b {
  font-size: 38px;
  font-weight: 400;
  line-height: 66px;
  color: #1fc423;
}

.peer span {
  display: flex;
  align-items: center;
  gap: 46px;
  margin-top: -11px;
  margin-left: 36px;
}

.peer span b {
  line-height: 44px;
}

.buy span {
  font-size: 38px;
  font-weight: 900;
  font-style: italic;
  background: linear-gradient(90deg, #f04030, #fd9a58);
  background-clip: text;
  color: transparent;
}

.add {
  color: #3f78b8;
}

/* Footer */
.footer {
  position: relative;
  display: flex;
  justify-content: space-between;
  align-items: flex-start;
  height: 270px;
  padding: 30px 43px 0 72px;
  background: linear-gradient(#060b07 8px, #101411 24px);
}

.backdrop {
  position: absolute;
  right: 0;
  top: 0;
  width: 520px;
  height: 270px;
}

.brand {
  position: relative;
  padding-top: 33px;
}

.brand-row {
  display: flex;
  align-items: center;
  gap: 12px;
  font-size: 49px;
  line-height: 64px;
}

.brand-row b {
  padding-bottom: 2px;
}

.brand p {
  margin-top: 20px;
  font-size: 36px;
  font-weight: 700;
  line-height: 54px;
}

.qr {
  position: relative;
  display: flex;
  align-items: center;
  justify-content: center;
  width: 209px;
  height: 210px;
  border-radius: 14px;
  background: #fff;
}

.qr-logo {
  position: absolute;
}
</style>
